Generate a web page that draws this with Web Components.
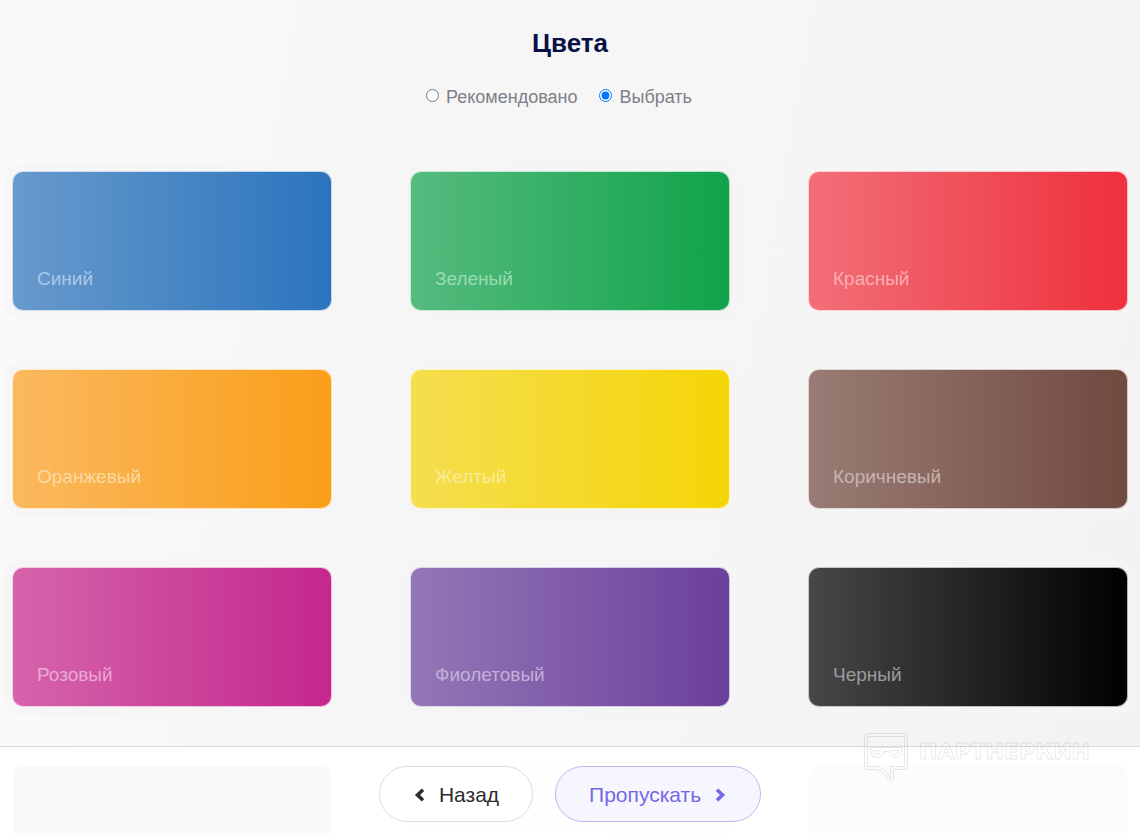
<!DOCTYPE html>
<html lang="ru">
<head>
<meta charset="utf-8">
<meta name="viewport" content="width=device-width, initial-scale=1">
<title>Цвета</title>
<style>
  body { margin: 0; font-family: "Liberation Sans", Arial, sans-serif; }
</style>
</head>
<body>
<color-page>
  <mode-switch slot="mode"></mode-switch>
  <color-card from="#689acc" to="#2b74bd" tint="#a9c8e8">Синий</color-card>
  <color-card from="#56bb7f" to="#10a34a" tint="#9adcb1">Зеленый</color-card>
  <color-card from="#f26f78" to="#ee303c" tint="#fbadb3">Красный</color-card>
  <color-card from="#fab95f" to="#fa9e19" tint="#fdd9a3">Оранжевый</color-card>
  <color-card from="#f5de50" to="#f5d506" tint="#faeb99">Желтый</color-card>
  <color-card from="#997c75" to="#70493f" tint="#c7b4b0">Коричневый</color-card>
  <color-card from="#d564ab" to="#c4278d" tint="#eaa9d2">Розовый</color-card>
  <color-card from="#9477b6" to="#6b3f9c" tint="#c2b0d8">Фиолетовый</color-card>
  <color-card from="#484848" to="#000000" tint="#9c9c9c">Черный</color-card>
  <color-card from="#8f8f8f" to="#808080"></color-card>
  <color-card from="#e4e4e4" to="#d6d6d6"></color-card>
  <color-card from="#d2c4ac" to="#c0ae8c"></color-card>
  <wizard-bar slot="footer">
    <pill-button icon="left">Назад</pill-button>
    <pill-button icon="right" primary>Пропускать</pill-button>
  </wizard-bar>
  <brand-mark slot="mark">ПАРТНЕРКИН</brand-mark>
</color-page>

<script>
  const define = (name, markup, setup) => {
    const template = document.createElement('template');
    template.innerHTML = markup;
    customElements.define(name, class extends HTMLElement {
      constructor() {
        super();
        this.attachShadow({ mode: 'open' }).append(template.content.cloneNode(true));
      }
      connectedCallback() { if (setup) setup(this, this.shadowRoot); }
    });
  };

  define('color-page', `
    <style>
      :host {
        display: block; position: relative; height: 100vh; overflow: hidden;
        background: linear-gradient(100deg, #fafafa, #f6f6f6 40%, #f5f5f5 75%, #f2f2f2);
      }
      main { height: 100%; overflow: auto; scrollbar-width: none; }
      header { display: grid; justify-items: center; gap: 28px; padding-top: 28px; }
      h1 { margin: 0; font-size: 26px; line-height: 30px; font-weight: 700; color: #0a1045; }
      .grid {
        display: grid; grid-template-columns: repeat(3, minmax(0, 1fr));
        gap: 58px 78px; padding: 63px 12px 88px;
      }
      .footer { position: absolute; left: 0; right: 0; bottom: 0; }
      .mark { position: absolute; right: 50px; bottom: 50px; pointer-events: none; }
    </style>
    <main>
      <header><h1>Цвета</h1><slot name="mode"></slot></header>
      <div class="grid"><slot></slot></div>
    </main>
    <div class="footer"><slot name="footer"></slot></div>
    <div class="mark"><slot name="mark"></slot></div>
  `);

  define('mode-switch', `
    <style>
      :host { display: block; padding-right: 22px; }
      form { display: flex; gap: 22px; }
      label { display: flex; align-items: center; gap: 7px; font-size: 18px; line-height: 22px; color: #7f7f87; }
      input { margin: 0 0 3px; width: 13px; height: 13px; accent-color: #0075ff; }
    </style>
    <form>
      <label><input type="radio" name="mode" value="auto">Рекомендовано</label>
      <label><input type="radio" name="mode" value="pick" checked>Выбрать</label>
    </form>
  `);

  define('color-card', `
    <style>
      :host { display: block; }
      button {
        display: flex; align-items: flex-end; box-sizing: border-box;
        width: 100%; height: 140px; padding: 0 24px 20px; cursor: pointer;
        border: 1px solid rgba(255, 255, 255, .7); border-radius: 11px;
        background: linear-gradient(90deg, var(--from), var(--to)) border-box;
        box-shadow: 0 0 0 8px rgba(245, 245, 245, .7);
        font: 19px/22px "Liberation Sans", Arial, sans-serif; color: var(--tint);
      }
    </style>
    <button type="button"><slot></slot></button>
  `, (host, root) => {
    const button = root.querySelector('button');
    for (const key of ['from', 'to', 'tint']) {
      button.style.setProperty('--' + key, host.getAttribute(key) || 'transparent');
    }
  });

  define('wizard-bar', `
    <style>
      :host {
        display: flex; justify-content: center; gap: 22px;
        padding: 19px 0 11px; border-top: 1px solid #d9d9d9;
        background: rgba(255, 255, 255, .95); background-clip: padding-box;
      }
    </style>
    <slot></slot>
  `);

  define('pill-button', `
    <style>
      :host { display: block; }
      button {
        display: flex; align-items: center; gap: 13px; height: 56px; padding: 2px 33px 0;
        border: 1px solid #dcdcdf; border-radius: 28px; background: #fff; cursor: pointer;
        font: 21px/24px "Liberation Sans", Arial, sans-serif; color: #2d2d2f;
      }
      :host([primary]) button { border-color: #c0b8ea; background: #f6f6ff; color: #7667e3; }
      svg { display: block; width: 13px; height: 14px; fill: none; stroke: currentColor; stroke-width: 3.600; }
      :host([icon="right"]) button { flex-direction: row-reverse; }
      :host([icon="right"]) svg { transform: scaleX(-1); }
    </style>
    <button type="button">
      <svg viewBox="0 0 13 14" aria-hidden="true"><path d="M10 1.800 4.500 7l5.500 5.200"/></svg>
      <span><slot></slot></span>
    </button>
  `);

  define('brand-mark', `
    <style>
      :host {
        display: flex; align-items: flex-start; gap: 10px;
        font: 700 22px/38px "DejaVu Sans", sans-serif;
        color: transparent; -webkit-text-stroke: 1px rgba(120, 120, 120, .18);
      }
      svg { display: block; width: 46px; height: 50px; fill: none; stroke: rgba(120, 120, 120, .18); }
    </style>
    <svg viewBox="0 0 46 50" aria-hidden="true">
      <path d="M5 .5h36q3.500 0 3.500 3.500v29q0 3.500-3.500 3.500H30.500V46q-1.500 3.500-4.500 1Q19 36.500 12 36.500H5Q1.500 36.500 1.500 33V4Q1.500.5 5 .5z"/>
      <path d="M6 3.500h34q1.500 0 1.500 1.500v27q0 1.500-1.500 1.500H27.500V45Q21 33.500 12 33.500H6Q4.500 33.500 4.500 32V5Q4.500 3.500 6 3.500z"/>
      <path d="M7.500 14.500h31v3q0 7-6 7-5 0-7-6h-4q-2 6-7 6-7 0-7-7z"/>
      <path d="M10.500 17.500h7q-1 4-4 4t-3-4zM28.500 17.500h7q0 4-3 4t-4-4z"/>
    </svg>
    <slot></slot>
  `);
</script>
</body>
</html>
